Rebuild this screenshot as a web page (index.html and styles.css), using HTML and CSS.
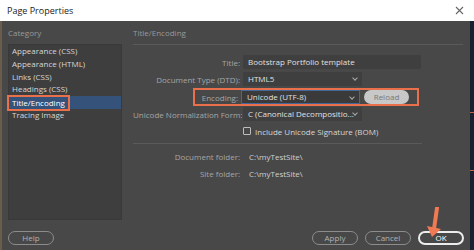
FILE: index.html
```html
<!DOCTYPE html>
<html lang="en">
<head>
    <meta charset="UTF-8">
    <meta name="viewport" content="width=device-width, initial-scale=1.0">
    <title>Page Properties</title>
    <link rel="stylesheet" href="styles.css">
</head>
<body>
<div class="screen">

<div class="dialog">
    <div class="titlebar">
        <span>Page Properties</span>
        <svg class="close" width="9" height="9" viewBox="0 0 9 9"><path d="M1 1L8 8M8 1L1 8" stroke="#666" stroke-width="1.1"/></svg>
    </div>

    <div class="body">
        <div class="main">
            <div class="side">
                <div class="side-head">Category</div>
                <ul class="list">
                    <li>Appearance (CSS)</li>
                    <li>Appearance (HTML)</li>
                    <li>Links (CSS)</li>
                    <li>Headings (CSS)</li>
                    <li class="sel"><span class="mark">Title/Encoding</span></li>
                    <li>Tracing Image</li>
                </ul>
            </div>

            <div class="panel">
                <div class="panel-head">Title/Encoding</div>

                <div class="row r-title">
                    <label>Title:</label>
                    <div class="field wide">Bootstrap Portfolio template</div>
                </div>
                <div class="row r-dtd">
                    <label>Document Type (DTD):</label>
                    <div class="field select">HTML5<span class="chev"></span></div>
                </div>
                <div class="row r-enc">
                    <div class="hl">
                        <label>Encoding:</label>
                        <div class="field select active">Unicode (UTF-8)<span class="chev"></span></div>
                        <div class="reload">Reload</div>
                    </div>
                </div>
                <div class="row r-norm">
                    <label>Unicode Normalization Form:</label>
                    <div class="field select">C (Canonical Decompositio...<span class="chev"></span></div>
                </div>
                <div class="row r-check">
                    <label></label>
                    <div class="check"><span class="box"></span>Include Unicode Signature (BOM)</div>
                </div>

                <div class="sep"></div>

                <div class="row r-doc">
                    <label>Document folder:</label>
                    <div class="value">C:\myTestSite\</div>
                </div>
                <div class="row r-site">
                    <label>Site folder:</label>
                    <div class="value">C:\myTestSite\</div>
                </div>
            </div>
        </div>

        <div class="footer">
            <div class="btn">Help</div>
            <div class="btns">
                <div class="btn">Apply</div>
                <div class="btn">Cancel</div>
                <div class="btn ok">OK</div>
            </div>
        </div>
    </div>
</div>

<div class="strip"></div>

<svg class="arrow" width="24" height="34" viewBox="0 0 24 34">
    <path d="M14 1L11 22" stroke="#f07a52" stroke-width="4" stroke-linecap="round"/>
    <polygon points="4,19 18,22 9,30" fill="#f07a52"/>
</svg>

</div>
</body>
</html>
```

FILE: styles.css
```css
*{
    margin: 0;
    padding: 0;
    box-sizing: border-box;
}
body{
    width: 474px;
    height: 250px;
    overflow: hidden;
    background: #1b2130;
    font-family: "Open Sans", "Noto Sans", sans-serif;
    font-size: 8px;
}
.screen{
    position: relative;
    display: flex;
    height: 250px;
}
.dialog{
    width: 470px;
    display: flex;
    flex-direction: column;
    background: #484848;
}
.strip{
    flex: 1;
    background: linear-gradient(
        to bottom,
        #ffffff 0, #ffffff 21px,
        #1a2232 21px, #1a2232 112px,
        #b8664a 112px, #b8664a 113px,
        #1a2232 113px, #1a2232 170px,
        #b8664a 170px, #b8664a 171px,
        #1a2232 171px
    );
}
.titlebar{
    height: 21px;
    background: #fff;
    display: flex;
    align-items: center;
    justify-content: space-between;
    padding: 0 6px 0 7px;
    color: #222;
    font-size: 9px;
}
.body{
    flex: 1;
    display: flex;
    flex-direction: column;
    border-left: 2px solid #6b5c4c;
}
.main{
    display: flex;
    gap: 11px;
    padding: 6px 7px 0 6px;
    height: 199px;
}

/* category list */
.side{
    width: 114px;
    display: flex;
    flex-direction: column;
}
.side-head{
    height: 17px;
    line-height: 11px;
    color: #999;
}
.list{
    flex: 1;
    list-style: none;
    background: #3e3e3e;
    border: 1px solid #393939;
}
.list li{
    height: 12.8px;
    line-height: 12.8px;
    padding-left: 3px;
    color: #d6d6d6;
    white-space: nowrap;
}
.list li.sel{
    background: #34527a;
    padding-left: 0;
    color: #fff;
}
.mark{
    display: inline-block;
    height: 12px;
    line-height: 12px;
    padding: 0 3px;
    margin-top: 0.4px;
    outline: 2px solid #ea6f4b;
}

/* right panel */
.panel{
    flex: 1;
    display: flex;
    flex-direction: column;
}
.panel-head{
    height: 18px;
    line-height: 11px;
    color: #999;
    border-bottom: 1px solid #5a5a5a;
}
.row{
    display: flex;
    align-items: center;
    height: 14px;
}
.row label{
    width: 107px;
    text-align: right;
    color: #a6a6a6;
    white-space: nowrap;
}
.row .field{
    margin-left: 3px;
    height: 14px;
    line-height: 13px;
    padding: 0 5px;
    background: #3f3f3f;
    color: #e0e0e0;
    white-space: nowrap;
    overflow: hidden;
}
.field.wide{
    width: 178px;
}
.field.select{
    position: relative;
    width: 119px;
}
.field.active{
    border: 1px solid #43679a;
    background: #3a3a3a;
    line-height: 12px;
}
.chev{
    position: absolute;
    right: 5px;
    top: 4px;
    width: 4px;
    height: 4px;
    border-right: 1px solid #aaa;
    border-bottom: 1px solid #aaa;
    transform: rotate(45deg);
}
.r-title{ margin-top: 10px; }
.r-dtd{ margin-top: 3px; }
.r-enc{
    margin-top: 2px;
    height: 18px;
    padding-left: 60px;
}
.hl{
    display: flex;
    align-items: center;
    height: 18px;
    width: 226px;
    border: 2px solid #ea6f4b;
}
.hl label{
    width: 43px;
}
.reload{
    margin-left: 4px;
    width: 45px;
    height: 14px;
    line-height: 14px;
    border-radius: 7px;
    background: #c8c8c8;
    color: #777;
    text-align: center;
}
.r-norm{ margin-top: 1px; }
.r-check{
    margin-top: 4px;
    height: 12px;
}
.check{
    margin-left: 3px;
    display: flex;
    align-items: center;
    color: #d6d6d6;
    white-space: nowrap;
}
.check .box{
    width: 8px;
    height: 8px;
    border: 1px solid #bdbdbd;
    border-radius: 1px;
    margin-right: 4px;
}
.sep{
    margin-top: 6px;
    width: 289px;
    height: 1px;
    background: #5a5a5a;
}
.r-doc{
    margin-top: 6px;
    height: 12px;
}
.r-site{
    margin-top: 5px;
    height: 12px;
}
.value{
    margin-left: 9px;
    color: #d0d0d0;
}

/* buttons */
.footer{
    display: flex;
    justify-content: space-between;
    padding: 11px 6px 0 6px;
}
.btns{
    display: flex;
    gap: 7px;
}
.btn{
    width: 46px;
    height: 14px;
    line-height: 12px;
    border: 1px solid #8c8c8c;
    border-radius: 7px;
    color: #b2b2b2;
    text-align: center;
}
.btn.ok{
    border: 2px solid #ececec;
    line-height: 10px;
    color: #fff;
}
.arrow{
    position: absolute;
    left: 423px;
    top: 207px;
}
```
